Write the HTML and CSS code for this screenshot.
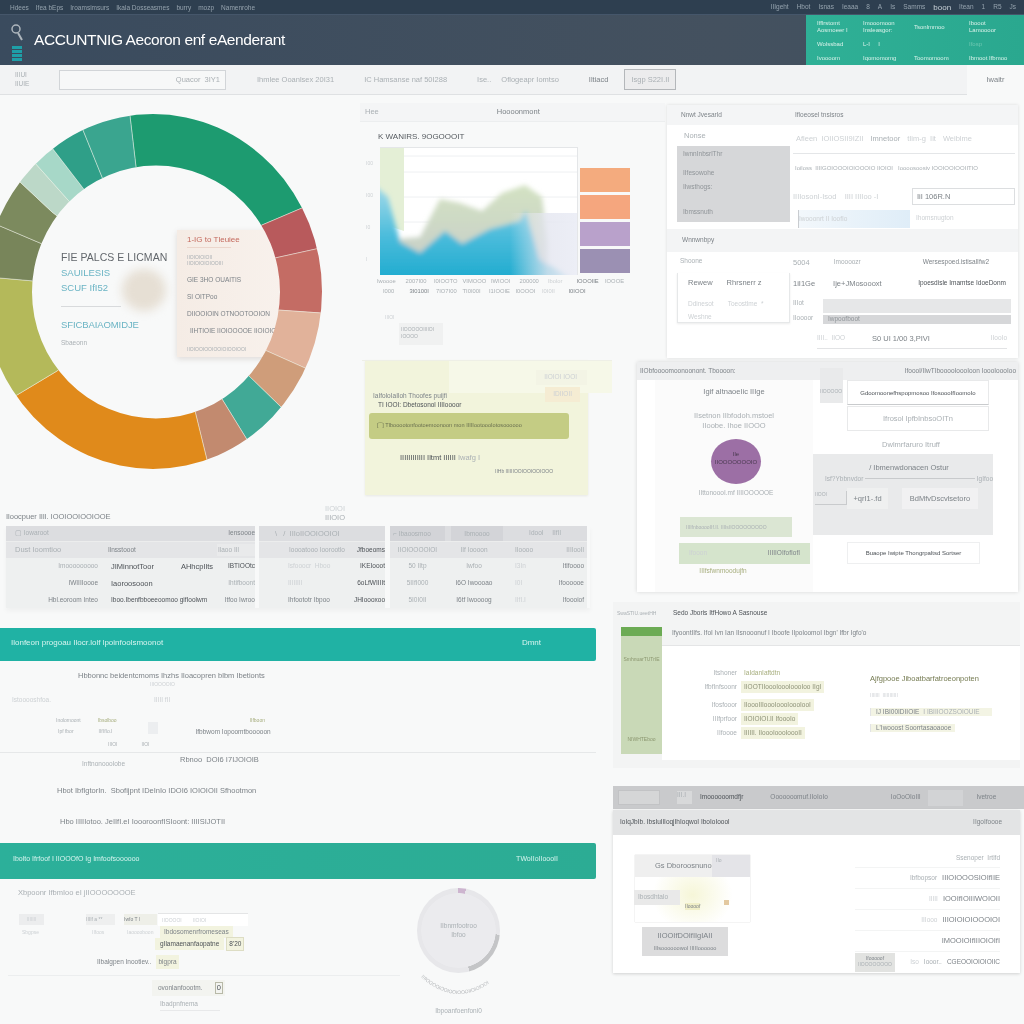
FILE: index.html
```html
<!DOCTYPE html>
<html lang="en">
<head>
<meta charset="utf-8">
<title>Accounting Assessment</title>
<link rel="stylesheet" href="styles.css">
</head>
<body>
<div class="app">
  <div class="topbar">
    <div class="topnav">
      <span>Hdees</span><span>Ifea bEps</span><span>Iroamsimsurs</span><span>Ikala Dosseasmes</span><span>burry</span><span>mozp</span><span>Namenrohe</span>
    </div>
    <div class="topnav topnav-right">
      <span>IIIgeht</span><span>Hbot</span><span>Isnas</span><span>Ieaaa</span><span>8</span><span>A</span><span>Is</span><span>Samms</span><span class="bright">boon</span><span>Itean</span><span>1</span><span>R5</span><span>Js</span>
    </div>
  </div>

  <div class="banner">
    <div class="brand-icons">
      <svg class="search-icon" viewBox="0 0 14 18" width="14" height="18"><circle cx="6" cy="6" r="4" fill="none" stroke="#aeb6bd" stroke-width="1.5"/><path d="M8 10 L12 17" stroke="#aeb6bd" stroke-width="2"/></svg>
      <div class="teal-bars"><i></i><i></i><i></i><i></i></div>
    </div>
    <h1 class="title">ACCUNTNIG Aecoron enf eAenderant</h1>
    <div class="banner-stats">
      <span>Ifflrstomt<br>Aosmoeer I</span><span>Imooomoon<br>Insleasgor:</span><span class="mid">Tsonlmmoo</span><span>Ibooot<br>Lamoooor</span>
      <span>Wolssbad</span><span>L-I &nbsp; &nbsp; I</span><span></span><span class="faint">Ifosp</span>
      <span>Ivoooom</span><span>Iqomomomg</span><span>Toomomoom</span><span>Ibmoot Ifbmoo</span>
    </div>
  </div>

  <div class="toolbar">
    <span class="t6 lt tool-label">IIIUI<br>IIUIE</span>
    <div class="search-box"><span class="t7 lt">Quacor &nbsp;3IY1</span></div>
    <span class="t7 lt ml-31">Ihmlee Ooanlsex 20I31</span>
    <span class="t7 lt ml-30">IC Hamsanse naf 50I288</span>
    <span class="t7 lt ml-30">Ise..</span>
    <span class="t7 lt ml-10">Oflogeapr Iomtso</span>
    <span class="t7 md ml-30">Iltiacd</span>
    <button class="tool-btn t7 lt ml-16">Isgp S22I.II</button>
    <div class="tool-right"><span class="t7 md">Iwaitr</span></div>
  </div>

  <div class="columns">
    <div class="col-left">
      <div class="hero">
        <div class="donut">
          <div class="donut-blob"></div>
          <div class="donut-text">
            <div class="dt-main">FIE PALCS E LICMAN</div>
            <div class="dt-teal">SAUILESIS</div>
            <div class="dt-teal">SCUF IfI52</div>
            <div class="dt-rule"></div>
            <div class="dt-teal dt-gap">SFICBAIAOMIDJE</div>
            <div class="t6 lt dt-foot">Sbaeonn</div>
          </div>
          <div class="donut-card">
            <div class="card-title">1-IG to Tleuiee</div>
            <div class="t5 lt card-line">IIOIOIOIOII<br>IIOIOIOIOIOOIII</div>
            <div class="t6 md card-line">GIE 3HO OUAITIS</div>
            <div class="t6 md card-line">SI OITPoo</div>
            <div class="t6 md card-line">DIIOOIOIN OTNOOTOOION</div>
            <div class="t6 md card-line card-in">IIHTIOIE IIOIOOOOE IIOIOIOO</div>
            <div class="t5 lt card-line">IIOIOOIOOIOOIOIOOIOOI</div>
          </div>
          <svg class="donut-svg" viewBox="0 95 360 405" width="360" height="405">
            <defs><clipPath id="ringclip"><path clip-rule="evenodd" d="M-16 291.5a169 177.5 0 1 0 338 0a169 177.5 0 1 0-338 0ZM32 292a124 126.5 0 1 0 248 0a124 126.5 0 1 0-248 0Z"/></clipPath></defs>
            <g clip-path="url(#ringclip)" stroke="#f1f3ea" stroke-width=".7" stroke-opacity=".65">
              <polygon fill="#1d9b70" points="156,292 136,167 124,65 300,60 342,191 262,225"/>
              <polygon fill="#b85a5c" points="156,292 262,225 342,191 357,240 275,258"/>
              <polygon fill="#c46c64" points="156,292 275,258 357,240 364,316 278,310"/>
              <polygon fill="#e1b29a" points="156,292 278,310 364,316 343,385 267,351"/>
              <polygon fill="#cf9d7a" points="156,292 267,351 343,385 313,438 249,376"/>
              <polygon fill="#41a996" points="156,292 249,376 313,438 270,477 222,399"/>
              <polygon fill="#c28a6f" points="156,292 222,399 270,477 219,509 195,411"/>
              <polygon fill="#e08a1b" points="156,292 195,411 219,509 100,540 -23,419 57,371"/>
              <polygon fill="#b4b95a" points="156,292 57,371 -23,419 -34,275 34,281"/>
              <polygon fill="#78855a" points="156,292 34,281 -34,275 -40,209 40,243"/>
              <polygon fill="#7c8a5e" points="156,292 40,243 -40,209 -12,152 52,212"/>
              <polygon fill="#bcd8c8" points="156,292 52,212 -12,152 2,126 68,200"/>
              <polygon fill="#a7d8c8" points="156,292 68,200 2,126 23,110 83,188"/>
              <polygon fill="#2f9f88" points="156,292 83,188 23,110 64,83 102,177"/>
              <polygon fill="#3aa58f" points="156,292 102,177 64,83 124,65 136,167"/>
            </g>
          </svg>
        </div>

        <div class="chart-col">
          <div class="chart-head"><span class="t7 lt">Hee</span><span class="t7 md ml-118">Hoooonmont</span></div>
          <div class="chart-title">K WANIRS. 9OGOOOIT</div>
          <div class="chart-row">
            <div class="y-axis t5 pale"><span>I00</span><span>I00</span><span>I0</span><span>I</span></div>
            <svg class="chart" viewBox="0 0 198 128" width="198" height="128">
              <defs>
                <linearGradient id="blue" x1="0" y1="0" x2="0" y2="1"><stop offset="0" stop-color="#a8dcea"/><stop offset=".5" stop-color="#49bbdb"/><stop offset="1" stop-color="#12a6cb"/></linearGradient>
                <linearGradient id="veil" x1="0" y1="0" x2="1" y2="0"><stop offset="0" stop-color="#e9eaf3" stop-opacity="0"/><stop offset=".55" stop-color="#e4e6f0" stop-opacity=".8"/><stop offset="1" stop-color="#eceef6" stop-opacity=".98"/></linearGradient>
                <linearGradient id="fade" x1="0" y1="0" x2="0" y2="1"><stop offset="0" stop-color="#d3e2c2"/><stop offset="1" stop-color="#c4c9cc"/></linearGradient>
                <filter id="soft" x="-10%" y="-10%" width="120%" height="130%"><feGaussianBlur stdDeviation="2.6"/></filter>
                <clipPath id="plot"><rect width="198" height="128"/></clipPath>
              </defs>
              <rect width="198" height="128" fill="#ffffff"/>
              <path d="M0 9H198M0 25H198M0 50H198M0 75H198" stroke="#eef0f2"/>
              <path fill="#e4efd6" d="M0 0H24V84L12 80 0 60Z"/>
              <g filter="url(#soft)" clip-path="url(#plot)">
                <path fill="url(#fade)" d="M16 92 L40 90 L60 52 L80 56 L102 64 L122 46 L145 38 L162 50 L168 95 L168 140 L16 140Z"/>
                <path fill="url(#blue)" d="M-8 36 L8 50 L20 95 L40 106 L65 84 L82 97 L110 82 L140 74 L146 64 L160 112 L192 132 L192 145 L-8 145Z"/>
              </g>
              <rect x="130" y="66" width="68" height="62" fill="url(#veil)"/>
              <path d="M0 .5H198M197.5 0V128" stroke="#e4e6e8" fill="none"/>
            </svg>
            <div class="swatches"><i class="sw-a"></i><i class="sw-b"></i><i class="sw-c"></i><i class="sw-d"></i></div>
          </div>
          <div class="x-row t6 lt"><span>Iwoooe</span><span>2007I00</span><span>I0IOOTO</span><span>VIMOOO</span><span>IWIOOI</span><span>200000</span><span class="pale">Ibolor</span><span class="md">IOOOIIE</span><span>IOOOE</span></div>
          <div class="x-row x-row2 t6 lt"><span>I000</span><span class="md">3I0100I</span><span>7IO7I00</span><span>TI0I00I</span><span>I1IOOIE</span><span>I0OOOI</span><span class="pale">I0I0II</span><span class="md">I0IOOI</span></div>
          <div class="mini-tile"><span class="t5 pale">IIIOI</span><div class="mini-body t5 lt">IIOOOOOIIIIOI<br>IOOOO</div></div>
          <div class="note">
            <div class="note-top"><span class="note-tag t6 pale">IIOIOI IOOI</span></div>
            <div class="note-body">
              <div class="note-row"><span class="t6 md">IaIfoloIaIloh Thoofes puijfi</span><span class="note-chip t6 pale">IDIIOII</span></div>
              <div class="t6 dk note-second">TI IOOI: Dbetosonol IIIIoooor</div>
              <div class="note-bar t6 md">[‾‾] Tlbooootonfootoemoonoon mon IIIIIootoooIotosoooooo</div>
              <div class="t7 dk note-third">IIIIIIIIIIII Iltmt IIIIII <span class="lt">Iwafg I</span></div>
              <div class="t5 md note-fourth">IIHb IIIIIIOOIOOIOOIOOO</div>
            </div>
          </div>
        </div>
      </div>

      <div class="stray t7 pale">IIOIOI<br><b class="lt">IIIOIO</b></div>
      <div class="table-title t7 md">Iloocpuer IlIl. IOOIOOIOOIOOE</div>
      <div class="table">
        <div class="group g1">
          <div class="g1-row th1"><span class="t6 lt g1-a">▢ Iowaroot</span><span></span><span class="t6 md end">Iensoooe</span></div>
          <div class="g1-row th2"><span class="t7 lt g1-a">Dust Ioomtioo</span><span class="t6 md g1-b">Ilnsstooot</span><span class="chip t6 lt">Ilaoo IIl</span></div>
          <div class="g1-row tr"><span class="t6 lt end">Imooooooooo</span><span class="t7 dk g1-c split"><em>JIMinnotToor</em><em>AHhcpIlts</em></span><span class="t6 dk end">IBTIOOtc</span></div>
          <div class="g1-row tr"><span class="t6 md end">IWIIIIoooe</span><span class="t7 dk g1-c">Iaoroosooon</span><span class="t6 lt end">Ihtifboont</span></div>
          <div class="g1-row tr"><span class="t6 md end">Hbl.eoroom Inteo</span><span class="t6 dk g1-c">Iboo.Ibenfbboeeoomoo gifIoolwm</span><span class="t6 md end">Itfoo Iwroo</span></div>
        </div>
        <div class="group g2">
          <div class="g2-row th1"><span class="t7 lt">\ &nbsp; / &nbsp;IIIoIIOOIOOIOI</span><span></span></div>
          <div class="g2-row th2"><span class="t6 lt end">Ioooatooo Ioorootlo</span><span class="t6 dk end">Jfboeoms</span></div>
          <div class="g2-row tr"><span class="t6 pale g2-a">Isfooocr &nbsp;Hboo</span><span class="t6 dk end">IKEIooot</span></div>
          <div class="g2-row tr"><span class="t6 pale g2-a">IIIIIIII</span><span class="t6 dk end">6oLfWIIIIt</span></div>
          <div class="g2-row tr"><span class="t6 md g2-a">Ihfoototr Ibpoo</span><span class="t6 dk end">JHIoooxoo</span></div>
        </div>
        <div class="group g3">
          <div class="g3-row th1"><span class="t6 lt dark-cell">⌐ Ibaoosmoo</span><span class="t6 lt dark-cell center">Ibmoooo</span><span class="t6 lt center">Idool &nbsp; &nbsp; IIfIl</span></div>
          <div class="g3-row th2"><span class="t6 lt center">IIOIOOOOIOI</span><span class="t6 lt center">IIf Ioooon</span><span class="t6 lt split"><em class="center">IIoooo</em><em>IIIIooIl</em></span></div>
          <div class="g3-row tr"><span class="t6 lt center">50 IItp</span><span class="t6 lt center">Iwfoo</span><span class="t6 md split"><em class="pale">I3In</em><em>Itlfoooo</em></span></div>
          <div class="g3-row tr"><span class="t6 lt center">5IIfI000</span><span class="t6 md center">I6O Iwoooao</span><span class="t6 md split"><em class="pale">I0I</em><em>Ifoooooe</em></span></div>
          <div class="g3-row tr"><span class="t6 lt center">5I0I0II</span><span class="t6 md center">I6tf Iwoooog</span><span class="t6 md split"><em class="pale">IIfI.I</em><em>Ifoooiof</em></span></div>
        </div>
      </div>

      <div class="teal-bar bar-one"><span>Ilonfeon progoau Ilocr.lolf lpoinfoolsmoonot</span><span class="bar-end">Dmnt</span></div>
      <div class="flow-block">
        <div class="fl-line t7 md fl-a">Hbbonnc beidentcmoms Ihzhs Iloacopren blbm Ibetionts</div>
        <div class="fl-line t5 pale fl-b">IIIOOOOIO</div>
        <div class="fl-line fl-row1"><span class="t6 pale fl-c">Istooooshfoa.</span><span class="t6 pale fl-d">IIIII fII</span></div>
        <div class="fl-line fl-row2"><span class="t5 lt fl-e">Inolomoont</span><span class="t5 yel fl-f">Ibsolboo</span><span class="t5 yel fl-g">IIfboon</span></div>
        <div class="fl-line fl-row3"><span class="t5 lt fl-h">Ipf fbor</span><span class="t5 lt fl-i">IIfIfIo.I</span><span class="tile-small"></span><span class="t6 md fl-j">Ifbbwom Iopoomtbooooon</span></div>
        <div class="fl-rule"><span class="t5 lt fl-k">IIIOI</span><span class="t5 lt fl-l">IIOI</span></div>
        <div class="fl-line fl-row4"><span class="t6 lt fl-n">Inftnonooolobe</span><span class="t7 md fl-m">Rbnoo &nbsp;DOI6 I7IJOIOIB</span></div>
        <div class="fl-line t7 md fl-o">Hbot IbfIgtorIn. &nbsp;Sbofijpnt IDeInIo IDOI6 IOIOIOII Sfhootmon</div>
        <div class="fl-line t7 md fl-p">Hbo IIIIIotoo. JeIIfI.eI IoooroonfISIoont: IIIISIJOTII</div>
      </div>

      <div class="teal-bar bar-two"><span>Ibolto Ifrfoof I IIOOOfO Ig Imfoofsoooooo</span><span class="bar-end">TWoIIoIIoooII</span></div>
      <div class="bottom">
        <div class="form-panel">
          <div class="t7 lt fp-title">Xbpoonr IfbmIoo eI jIIOOOOOOOE</div>
          <div class="fp-row fp-row1"><span class="fp-tile t5 pale">IIIIIII</span><span class="fp-tile2 t5 lt">IIIIf a **</span><span class="fp-tile3 t5 md">Iwfo T I</span><span class="fp-input t5 pale">IIOOOOI &nbsp; &nbsp; &nbsp; &nbsp;IIOIOI</span></div>
          <div class="fp-row fp-row2"><span class="t5 pale fp-l1">Sbgpse</span><span class="t5 pale fp-l2">IIfoos</span><span class="t5 pale fp-l3">Iaooooboon</span><span class="t6 md ybg fp-l4">Ibdosomenrfromeseas</span></div>
          <div class="fp-row fp-row3"><span class="t6 dk ybg fp-m1">gIlamaenanfaopatne</span><span class="t6 dk ybg fp-m2">8'20</span></div>
          <div class="fp-row fp-row4"><span class="t6 md fp-n1">IIbalgpen Inootiev..</span><span class="t6 md ybg fp-n2">bigpra</span></div>
        </div>
        <div class="fp-sub"><span class="t6 md">ovonlanfoootm.</span><span class="t7 dk fp-zero">0</span></div>
        <div class="fp-sub2 t6 lt">Ibadpnfnema</div>
        <div class="ring-wrap">
          <div class="ring"><span class="t6 lt">IIbnmfootroo<br>Ibfoo</span></div>
          <svg class="arc-text" viewBox="0 0 80 24" width="80" height="24"><defs><path id="curve" d="M2 2 Q40 36 78 2"/></defs><text class="arc-label"><textPath href="#curve">IIIIOOOOIOOIOOIOOOIIOIOIOOI</textPath></text></svg>
          <div class="t6 lt ring-cap">Ibpoanfoenfoni0</div>
        </div>
      </div>
    </div>

    <div class="col-right">
      <section class="panel-one">
        <div class="po-head"><span class="t6 md po-h1">Nnwt Jvesarld</span><span class="t6 md">Ifloeosel tnsisros</span></div>
        <div class="po-grid">
          <div class="po-left">
            <div class="po-name t7 lt">Nonse</div>
            <div class="po-gray t6 lt"><span>IwnnInbsrlThr</span><span class="po-s1">IIfesowohe</span><span class="po-s2">IIwsthogs:</span><span class="po-s3">Ibmssnuth</span></div>
          </div>
          <div class="po-right">
            <div class="po-r1 t7 pale"><span>Afleen &nbsp;IOIIOSII9IZII</span><span class="lt">Imnetoor</span><span>tIim-g &nbsp;Iit</span><span>Weiblme</span></div>
            <div class="po-lines"><div class="po-line"><span class="t6 lt">Ioiloss &nbsp;IIIIGOIOOOIOIOOOIO IIOIOI &nbsp; Ioooosoosiv IOOIOOIOOIITIO</span></div></div>
            <div class="po-r3"><span class="t7 pale">IIIIosonI-Isod &nbsp; &nbsp;IIII IIIIoo -I</span><span class="po-box t7 md">IiI 106R.N</span></div>
            <div class="po-r4"><span class="po-blue t6 pale">Iwooonrt II IoofIo</span><span class="t6 pale po-after">Ihomsnugton</span></div>
          </div>
        </div>
        <div class="po-strip t6 md">Wnnwnbpy</div>
        <div class="po-grid2">
          <div class="po-left2">
            <div class="t6 lt po-sh">Shoone</div>
            <div class="po-box2"><div class="po-bl1 t7 md"><span>Rewew</span><span class="ml-14">Rhrsnerr z</span></div><div class="po-bl2 t6 pale"><span>Ddinesot</span><span class="ml-14">Toeostlme &nbsp;*</span></div><div class="t6 pale po-bl3">Weshne</div></div>
          </div>
          <div class="po-right2">
            <div class="po-rr1"><span class="t7 lt">5004</span><span class="t6 lt ml-24">Imoooozr</span><span class="t6 md po-push">Wersespoed.istisalIfw2</span></div>
            <div class="po-rr2"><span class="t7 md">1iI1Ge</span><span class="t7 md ml-18">Ije+JMosoooxt</span><span class="t6 dk po-push">Ipoesdisle Imamtse IdoeDonm</span></div>
            <div class="po-bars"><div class="po-side t6 lt"><span>IIIot</span><span>IIoooor</span></div><div class="po-barstack"><div class="po-bar1"></div><div class="po-bar2 t6 lt">Iwpoofboot</div></div></div>
          </div>
        </div>
        <div class="po-foot"><span class="t6 pale po-f1">IIII.. &nbsp;IIOO</span><span class="t7 md po-f2">S0 UI 1/00 3,PIVI</span><span class="t6 pale po-f3">IIooIo</span></div>
      </section>

      <section class="panel-two">
        <div class="pt-head"><span class="t6 md">IIObfoooomoonoonont. Tboooon:</span><span class="t6 lt pt-hm">I 05</span><span class="t6 md pt-hr">Ifoool/IIwTIbooooIoooIoon IoooIoooIoo</span></div>
        <div class="pt-body">
          <div class="pt-left">
            <div class="pt-l1 t7 md">Igif aItnaoeIic IIIge</div>
            <div class="pt-l2 t7 lt">IIsetnon IIbfodoh.mstoel<br>IIoobe. Ihoe IIOOO</div>
            <div class="pt-circle t6 dk">Ile<br>IIOOOOOOOIO</div>
            <div class="pt-l3 t6 lt">IIttonoooI.mf IIIIOOOOOE</div>
            <div class="pt-green1 t5 lt">IIIIfnbooooIIf.II. IIIIsIIOOOOOOOOO</div>
            <div class="pt-green2 t6 md"><span class="pale">Ifooon</span><span>IIIIIOIfofIofI</span></div>
            <div class="pt-l4 t6 yel">IIIfsfwnmoodujfn</div>
          </div>
          <div class="pt-right">
            <div class="pt-top">
              <div class="pt-tab t5 lt">IIOOOOO</div>
              <div class="pt-boxes"><div class="pt-box t6 dk box-line">Gdoomoonefhspopmosoo IfosoooIfIoomoIo</div><div class="pt-box t7 lt">Ifrosol IpfbInbsoOITn</div></div>
            </div>
            <div class="pt-cap t7 lt">Dwlmrfaruro Itruff</div>
            <div class="pt-block">
              <div class="pt-bt t7 md">/ Ibmenwdonacen Ostur</div>
              <div class="pt-axis t6 lt"><span>Isf?Ybbnvdor</span><i></i><span>IgIfoo</span></div>
              <div class="pt-inputs">
                <div class="pt-cell t5 lt">IIOOI</div>
                <div class="pt-val t7 md">+qrI1-.fd</div>
                <div class="pt-val2 t7 md">BdMfvDscvlsetoro</div>
              </div>
            </div>
            <div class="pt-final t6 dk">Buaope Iwipte Thongrpaltsd Sortser</div>
          </div>
        </div>
      </section>

      <section class="panel-a">
        <div class="pa-head"><span class="t5 lt pa-h1">SwaSTIU.ueetHH</span><span class="t6 dk">Sedo Jboris ItfHowo A Sasnouse</span></div>
        <div class="pa-main">
          <div class="pa-side"><div class="pa-side-top"></div><div class="pa-side-body t5 lt"><span>SmhnuarTUTrIE</span><span>NIWHTEboo</span></div></div>
          <div class="pa-content">
            <div class="pa-sub t6 md">IfyoontIIfs. IfoI Ivn Ian IIsnooonuf I Iboofe IIpoloomoI Ibgn' Ifbr Igfo'o</div>
            <div class="pa-white">
              <div class="pa-form">
                <div class="pa-fr"><span class="t6 lt">Itshoner</span><b class="t6 yel val">IaIdanIaftdtn</b></div>
                <div class="pa-fr"><span class="t6 lt">IfbfInfsoonr</span><b class="t6 lt val vbg">IIOOTIIoooIoooIoooIoo&nbsp;IIgI</b></div>
                <div class="pa-fr pa-fr-gap"><span class="t6 lt">Ifosfooor</span><b class="t6 lt val vbg">IIoooIIIoooIoooIoooIooI</b></div>
                <div class="pa-fr"><span class="t6 lt">IIIfprfoor</span><b class="t6 lt val vbg">IIOIOIOI.II IfoooIo</b></div>
                <div class="pa-fr"><span class="t6 lt">IIfoooe</span><b class="t6 lt val vbg">IIIIII. IIoooIoooIoooII</b></div>
              </div>
              <div class="pa-info">
                <div class="t7 yelk pa-i1">Ajfgpooe Jiboatbarfatroeonpoten</div>
                <div class="t5 pale pa-i2">IIIIIII &nbsp;IIIIIIIIIII</div>
                <div class="pa-i3"><span class="t7 md">IJ IBI00IDIIOIE</span><span class="t7 lt">I IBIIIOOZSOIOUIE</span></div>
                <div class="pa-i4 t7 md">L'Iwooost Soorrtasaoaooe</div>
              </div>
            </div>
          </div>
        </div>
      </section>

      <div class="graybar">
        <div class="gb-mini"></div><div class="gb-box t6 lt">III.I</div>
        <span class="t6 dk gb-a">Imoooooomdfjr</span><span class="t6 md gb-b">Ooooooomuf.IIoIoIo</span><span class="t6 md gb-c">IoOoOIoIIl</span><div class="gb-soft"></div><span class="t6 md gb-d">Ivetroe</span>
      </div>

      <section class="panel-b">
        <div class="pb-head"><span class="t6 dk">IoIqJbIb. IbsIuIlIoqjIhIoqwoI IboIoIoool</span><span class="t6 md">IIgoIfoooe</span></div>
        <div class="pb-body">
          <div class="pb-left">
            <div class="pb-card">
              <div class="pb-ctop"><span class="t7 md">Gs Dboroosnuno</span><span class="pb-cside t5 lt">IIo</span></div>
              <div class="pb-glow"><span class="pb-lab t6 lt">Ibosdhtalo</span><span class="pb-yel t5 md">IIoooof</span><span class="pb-ora"></span></div>
            </div>
            <div class="pb-tile"><span class="t7 md">IIOOIfDOIfIIgIAII</span><span class="t6 md">IIIsoooooowoI IIIIIoooooo</span></div>
          </div>
          <div class="pb-list">
            <div class="pb-cap t6 lt">Ssenoper &nbsp;Irtlfd</div>
            <div class="pb-li"><span class="t6 lt">Ibfbopsor</span><span class="t7 md">IIIOIOOOSIOIfIIE</span></div>
            <div class="pb-li"><span class="t6 pale">IIIII</span><span class="t7 md">IOOIfIOIIIWOIOII</span></div>
            <div class="pb-li"><span class="t6 pale">IIIooo</span><span class="t7 md">IIIOIOIOIOOOIOI</span></div>
            <div class="pb-li"><span></span><span class="t7 md">IMOOIOIfIIIOIOIfI</span></div>
            <div class="pb-li pb-last"><span class="pb-tag t5 md">Ifooooof<br><i class="lt">IIOOOOOOOO</i></span><span class="t6 pale">Iso</span><span class="t6 lt">Iooor..</span><span class="t6 md">CGEOOIOIOIOIIC</span></div>
          </div>
        </div>
      </section>
    </div>
  </div>
</div>
</body>
</html>
```

FILE: styles.css
```css
* { box-sizing: border-box; }
html, body { margin: 0; padding: 0; }
body { width: 1024px; height: 1024px; overflow: hidden; background: #f8f9f9; font-family: "Liberation Sans", Arial, sans-serif; }
.app { width: 1024px; height: 1024px; display: flex; flex-direction: column; overflow: hidden; filter: blur(.4px); background: #f8f9f9; }
em, i, b { font-style: normal; font-weight: normal; }

.t5 { font-size: 5px; line-height: 1.25; }
.t6 { font-size: 6.5px; line-height: 1.25; }
.t7 { font-size: 7.5px; line-height: 1.25; }
.dk { color: #4d5257; }
.md { color: #7d8388; }
.lt { color: #aab0b4; }
.pale { color: #cdd1d4; }
.yel { color: #a6ad7d; }
.yelk { color: #757b52; }
.end { text-align: right; justify-self: end; }
.center { text-align: center; }
.split { display: flex; justify-content: space-between; }

.ml-10 { margin-left: 10px; }
.ml-14 { margin-left: 14px; }
.ml-16 { margin-left: 16px; }
.ml-18 { margin-left: 18px; }
.ml-24 { margin-left: 24px; }
.ml-30 { margin-left: 30px; }
.ml-31 { margin-left: 31px; }
.ml-118 { margin-left: 118px; }

/* top */
.topbar { height: 15px; flex: none; background: #2e3f50; display: flex; justify-content: space-between; align-items: center; padding: 0 8px 0 10px; border-bottom: 1px solid #45566a; }
.topnav { display: flex; gap: 7px; font-size: 6.5px; color: #95a3ae; }
.topnav-right { gap: 8px; }
.topnav .bright { color: #c6d0d6; font-size: 8px; }
.banner { height: 50px; flex: none; background: linear-gradient(90deg, #3a4b5e, #44515f 70%, #40505f); display: flex; align-items: center; }
.brand-icons { width: 34px; height: 50px; padding: 8px 0 0 10px; flex: none; display: flex; flex-direction: column; }
.teal-bars { display: flex; flex-direction: column; gap: 1px; margin: 5px 0 0 2px; }
.teal-bars i { display: block; width: 10px; height: 3px; background: #1e9fa8; }
.title { font-size: 15.5px; font-weight: normal; color: #fff; margin: 0; letter-spacing: -.4px; white-space: nowrap; flex: 1; }
.banner-stats { width: 218px; height: 50px; flex: none; background: linear-gradient(90deg, #2fb096, #2aa88f); display: grid; grid-template-columns: 46px 51px 55px 1fr; grid-template-rows: 20px 14px 14px; padding: 2px 0 0 11px; font-size: 6px; line-height: 1.15; color: #d9f2ea; align-items: center; white-space: nowrap; }
.banner-stats .faint { color: #6cc7b1; }
.toolbar { height: 30px; flex: none; background: #f2f3f4; border-bottom: 1px solid #dfe1e3; display: flex; align-items: center; padding-left: 15px; white-space: nowrap; }
.tool-label { width: 20px; }
.search-box { margin-left: 24px; width: 167px; height: 20px; border: 1px solid #d2d5d8; background: #f7f8f8; display: flex; justify-content: flex-end; align-items: center; padding-right: 5px; }
.tool-btn { width: 52px; height: 21px; border: 1px solid #b4b7ba; background: #ececed; padding: 0; font-family: inherit; }
.tool-right { margin-left: auto; width: 57px; height: 30px; background: #f8f9f9; display: flex; align-items: center; justify-content: center; }

/* columns */
.columns { flex: 1; display: flex; min-height: 0; }
.col-left { width: 637px; flex: none; display: flex; flex-direction: column; }
.col-right { flex: 1; min-width: 0; padding-top: 10px; display: flex; flex-direction: column; }

/* donut */
.hero { height: 405px; flex: none; display: flex; }
.donut { width: 360px; height: 405px; flex: none; position: relative; }
.donut-svg { display: block; overflow: hidden; position: relative; z-index: 1; }
.donut-blob { position: absolute; left: 122px; top: 174px; width: 44px; height: 42px; border-radius: 50%; background: #e6dfd4; filter: blur(5px); }
.donut-text { position: absolute; left: 61px; top: 155px; }
.dt-main { font-size: 10.5px; line-height: 15px; color: #62676c; letter-spacing: .05px; white-space: nowrap; }
.dt-teal { font-size: 9.5px; line-height: 15px; color: #6ab4c4; white-space: nowrap; }
.dt-rule { width: 60px; height: 1px; background: #d8dadc; margin: 11px 0 10px; }
.dt-gap { letter-spacing: -.1px; }
.dt-foot { margin-top: 7px; }
.donut-card { position: absolute; left: 177px; top: 135px; width: 106px; height: 127px; background: linear-gradient(90deg, #f5ece5, #f8f1ec); box-shadow: 0 2px 6px rgba(120,100,90,.2); padding: 5px 0 0 10px; white-space: nowrap; }
.card-title { font-size: 8px; line-height: 10px; color: #c46a5e; border-bottom: 1px solid #ecd6cc; width: 44px; padding-bottom: 2px; margin-bottom: 6px; white-space: nowrap; }
.card-line { margin-bottom: 9px; }
.card-in { margin-left: 3px; margin-bottom: 11px; }

/* chart */
.chart-col { width: 277px; flex: none; padding-top: 8px; }
.chart-head { width: 305px; height: 19px; padding-left: 5px; background: #f4f5f6; display: flex; align-items: center; border-bottom: 1px solid #eceeef; }
.chart-title { font-size: 8px; line-height: 10px; color: #555a5f; padding: 10px 0 5px 18px; }
.chart-row { display: flex; height: 129px; }
.y-axis { width: 20px; height: 128px; display: flex; flex-direction: column; justify-content: space-around; padding-left: 6px; }
.chart { display: block; flex: none; }
.swatches { width: 50px; margin-left: 2px; padding-top: 21px; display: flex; flex-direction: column; gap: 3px; }
.swatches i { display: block; width: 50px; height: 24px; }
.sw-a { background: #f4ab7e; }
.sw-b { background: #f5a67e; }
.sw-c { background: #b9a1cb; }
.sw-d { background: #9b90b3; }
.x-row { display: grid; grid-template-columns: repeat(9, 26px); gap: 0 2.5px; padding: 2px 0 0 17px; white-space: nowrap; font-size: 5.8px; }
.x-row2 { grid-template-columns: repeat(8, 24px); padding-top: 3px; padding-left: 23px; }
.mini-tile { margin: 10px 0 0 25px; height: 27px; }
.mini-body { margin-left: 14px; width: 44px; height: 22px; background: #f0f1f1; padding: 3px 2px; }
.note { margin: 28px 0 0 2px; width: 250px; }
.note-top { height: 33px; width: 250px; background: linear-gradient(90deg, #f9faf9 35%, #f6f8e8 35%); border-top: 1px solid #eeefe6; display: flex; justify-content: flex-end; align-items: center; padding-right: 25px; }
.note-tag { background: #f3f4e5; padding: 3px 10px 3px 8px; }
.note-body { width: 223px; margin-left: 3px; margin-top: -33px; height: 135px; background: #f2f4dc; padding-top: 32px; box-shadow: 0 1px 2px rgba(120,120,90,.12); position: relative; }
.note-top { position: relative; z-index: 1; background: linear-gradient(90deg, rgba(249,250,249,0) 35%, #f6f8e8 35%); }
.note-row { display: flex; justify-content: space-between; padding: 0 8px 0 8px; position: relative; z-index: 2; }
.note-chip { background: #f5ecd3; padding: 3px 8px; margin-top: -5px; }
.note-second { padding-left: 13px; margin-top: -1px; }
.note-bar { margin: 4px 0 0 4px; width: 200px; height: 26px; background: #c4cc84; border-radius: 3px; padding: 9px 0 0 8px; white-space: nowrap; color: #6a7050; font-size: 5.6px; }
.note-third { padding-left: 35px; margin-top: 14px; white-space: nowrap; }
.note-fourth { padding-left: 130px; margin-top: 6px; white-space: nowrap; }

/* table */
.stray { margin: 4px 0 0 325px; height: 22px; }
.stray b { display: block; }
.table-title { margin: -14px 0 4px 6px; height: 10px; white-space: nowrap; }
.table { width: 584px; margin-left: 6px; display: flex; gap: 4px; height: 82px; flex: none; box-shadow: 0 3px 5px rgba(0,0,0,.04); white-space: nowrap; }
.group { background: #eef0f0; flex: none; }
.g1 { width: 249px; }
.g2 { width: 126px; }
.g3 { width: 197px; margin-left: 1px; }
.th1 { height: 15px; background: #dcdde0; }
.th2 { height: 17px; background: #e4e5e7; border-top: 1px solid #eceded; }
.tr { height: 17px; }
.g1-row { display: grid; grid-template-columns: 92px 119px 38px; align-items: center; padding-right: 2px; }
.g1-a { padding-left: 9px; }
.g1-b { padding-left: 10px; }
.g1-c { padding-left: 13px; padding-right: 4px; }
.chip { background: #e9eaeb; padding: 2px 1px; }
.g2-row { display: grid; grid-template-columns: 86px 40px; align-items: center; padding-right: 2px; }
.g2-row.th1 { padding-left: 16px; grid-template-columns: 110px 0; }
.g2-a { padding-left: 29px; }
.g3-row { display: grid; grid-template-columns: 55px 58px 84px; align-items: center; height: 17px; }
.g3-row.th1 { height: 15px; }
.g3-row .split { padding: 0 3px 0 12px; }
.dark-cell { background: #d3d4d8; height: 15px; line-height: 15px; padding-left: 3px; }
.dark-cell + .dark-cell { margin-left: 6px; padding: 0; }

/* teal */
.teal-bar { width: 596px; flex: none; display: flex; justify-content: space-between; align-items: center; padding: 0 55px 0 11px; color: #d7f4ef; white-space: nowrap; border-radius: 0 2px 2px 0; }
.bar-one { height: 33px; margin-top: 20px; background: #20b2a4; padding-bottom: 5px; font-size: 8px; }
.bar-two { height: 36px; background: linear-gradient(90deg, #2cb09a, #2cac94); padding: 0 38px 6px 13px; font-size: 7px; }
.flow-block { height: 182px; flex: none; width: 596px; padding-top: 10px; white-space: nowrap; }
.fl-line { height: 10px; }
.fl-a { margin-left: 78px; }
.fl-b { margin-left: 150px; }
.fl-row1 { display: flex; margin-top: 5px; }
.fl-c { margin-left: 12px; }
.fl-d { margin-left: 103px; }
.fl-row2 { display: flex; margin-top: 11px; }
.fl-e { margin-left: 56px; }
.fl-f { margin-left: 17px; }
.fl-g { margin-left: 133px; }
.fl-row3 { display: flex; margin-top: 1px; }
.fl-h { margin-left: 58px; }
.fl-i { margin-left: 25px; }
.tile-small { width: 10px; height: 12px; margin: -6px 0 0 36px; background: #eceef0; }
.fl-j { margin-left: 37px; }
.fl-rule { height: 12px; margin-top: 3px; display: flex; border-bottom: 1px solid #e6e8e9; align-items: flex-start; }
.fl-k { margin-left: 108px; }
.fl-l { margin-left: 24px; }
.fl-row4 { display: flex; height: 15px; }
.fl-n { margin-left: 82px; align-self: flex-end; }
.fl-m { margin-left: 55px; padding-top: 2px; align-self: flex-start; }
.fl-o { margin: 18px 0 0 57px; }
.fl-p { margin: 21px 0 0 60px; }

/* bottom */
.bottom { flex: 1; position: relative; width: 596px; white-space: nowrap; }
.form-panel { margin-left: 8px; width: 392px; height: 97px; border-bottom: 1px solid #eceeef; padding-top: 9px; }
.fp-title { margin-left: 10px; }
.fp-row { display: flex; align-items: center; }
.fp-row1 { margin-top: 15px; height: 14px; }
.fp-tile { margin-left: 11px; width: 25px; height: 11px; background: #ecedee; text-align: center; line-height: 11px; }
.fp-tile2 { margin-left: 42px; width: 29px; height: 11px; background: #eeefef; line-height: 11px; }
.fp-tile3 { margin-left: 9px; width: 33px; height: 11px; background: #eeefe8; line-height: 11px; }
.fp-input { margin-left: 1px; width: 90px; height: 13px; background: #fff; border-top: 1px solid #e4e5e6; line-height: 12px; padding-left: 4px; }
.fp-row2 { height: 12px; }
.fp-l1 { margin-left: 14px; width: 30px; }
.fp-l2 { margin-left: 40px; width: 30px; }
.fp-l3 { margin-left: 5px; width: 30px; }
.ybg, .vbg { background: #f2f3df; }
.fp-l4 { margin-left: 3px; padding: 2px 4px; }
.fp-row3 { height: 12px; }
.fp-m1 { margin-left: 147px; padding: 2px 5px; }
.fp-m2 { margin-left: 2px; padding: 2px; border: 1px solid #ddddc4; }
.fp-row4 { height: 12px; margin-top: 6px; }
.fp-n1 { margin-left: 89px; }
.fp-n2 { margin-left: 5px; padding: 3px 2px; }
.fp-sub { margin: 4px 0 0 152px; width: 73px; height: 16px; background: #f3f4f0; display: flex; justify-content: space-between; align-items: center; padding: 0 2px 0 6px; }
.fp-zero { border: 1px solid #b8b9a8; padding: 0 1px; }
.fp-sub2 { margin: 4px 0 0 160px; width: 60px; border-bottom: 1px solid #e8e9ea; padding-bottom: 2px; }
.ring-wrap { position: absolute; left: 417px; top: 9px; width: 83px; display: flex; flex-direction: column; align-items: center; }
.ring { width: 83px; height: 85px; border-radius: 50%; display: flex; align-items: center; justify-content: center; text-align: center; background: radial-gradient(circle, #ebebee 0 37px, transparent 37.6px), conic-gradient(#cdb5cf 0 10deg, #e7e7ea 10deg 96deg, #c4c5c7 96deg 165deg, #e7e7ea 165deg); }
.arc-text { display: block; margin-top: 2px; overflow: visible; }
.arc-label { font-size: 5px; fill: #b4b7ba; font-family: "Liberation Sans", Arial, sans-serif; }
.ring-cap { margin-top: 8px; }

/* panel one */
.panel-one { margin-left: 30px; width: 351px; height: 253px; flex: none; background: #fff; box-shadow: 0 0 3px rgba(0,0,0,.12); padding: 0 3px 0 10px; white-space: nowrap; }
.po-head { height: 20px; margin-left: -10px; margin-right: -3px; padding-left: 14px; background: #f4f5f6; display: flex; align-items: center; }
.po-h1 { width: 114px; }
.po-grid { display: grid; grid-template-columns: 113px 222px; gap: 3px; }
.po-name { height: 21px; padding: 6px 0 0 7px; }
.po-gray { height: 76px; background: #d6d7d9; padding: 4px 0 0 6px; display: flex; flex-direction: column; color: #8f9498; }
.po-s1 { margin-top: 11px; }
.po-s2 { margin-top: 6px; }
.po-s3 { margin-top: 17px; }
.po-r1 { height: 21px; display: flex; gap: 7px; align-items: center; padding: 6px 0 0 3px; }
.po-lines { height: 32px; }
.po-line { height: 16px; border-top: 1px solid #e4e6e8; margin-top: 7px; padding: 2px 0 0 2px; }
.po-line .t6 { font-size: 6px; }
.po-r3 { height: 23px; display: flex; justify-content: space-between; align-items: center; }
.po-box { width: 103px; height: 17px; border: 1px solid #dcdee0; padding: 3px 0 0 4px; }
.po-r4 { height: 21px; display: flex; align-items: center; }
.po-blue { width: 112px; height: 18px; margin-left: 5px; background: linear-gradient(90deg, #f2f7fb, #dfedf8); border-left: 1px solid #c9ccd0; line-height: 18px; }
.po-after { margin-left: 6px; }
.po-strip { height: 23px; background: #f3f4f5; margin: 0 -3px 0 -10px; padding: 7px 0 0 15px; }
.po-grid2 { display: grid; grid-template-columns: 113px 222px; gap: 10px; }
.po-sh { height: 21px; padding: 5px 0 0 3px; }
.po-box2 { height: 50px; border: 1px solid #e6e8e9; border-top: 0; box-shadow: 0 1px 2px rgba(0,0,0,.08); padding-top: 5px; padding-left: 10px; }
.po-bl1 { height: 22px; }
.po-bl2 { height: 13px; }
.po-right2 { margin-left: -7px; }
.po-rr1, .po-rr2 { height: 21px; display: flex; align-items: center; }
.po-rr1 { padding-right: 33px; }
.po-rr2 { padding-right: 16px; }
.po-push { margin-left: auto; }
.po-bars { display: flex; height: 28px; margin-top: 5px; }
.po-side { width: 30px; display: flex; flex-direction: column; gap: 7px; }
.po-barstack { flex: 1; }
.po-bar1 { height: 14px; background: #e6e7e8; margin-right: 11px; }
.po-bar2 { height: 9px; margin-top: 2px; margin-right: 11px; background: #d6d7d9; padding-left: 5px; color: #8f9498; }
.po-foot { display: flex; height: 20px; align-items: center; margin: 2px 8px 0 140px; border-bottom: 1px solid #e2e3e5; }
.po-f1 { width: 55px; }
.po-f3 { margin-left: auto; }

/* panel two */
.panel-two { margin-top: 4px; width: 381px; height: 230px; flex: none; background: #fff; box-shadow: 0 0 4px rgba(0,0,0,.14); white-space: nowrap; }
.pt-head { height: 18px; background: #eeeff0; display: flex; align-items: center; padding: 0 2px 0 3px; }
.pt-hm { margin-left: 95px; }
.pt-hr { margin-left: auto; }
.pt-body { display: flex; margin-left: 18px; height: 212px; }
.pt-left { width: 158px; background: #fbfbfb; display: flex; flex-direction: column; align-items: center; padding-top: 7px; }
.pt-l2 { margin-top: 15px; text-align: center; line-height: 10px; }
.pt-circle { width: 50px; height: 45px; margin: 8px 0 0 4px; border-radius: 50%; background: #9c6fa5; text-align: center; padding-top: 12px; color: #4a3a50; font-size: 6px; }
.pt-l3 { margin-top: 5px; margin-left: 4px; }
.pt-green1 { width: 112px; height: 20px; margin-top: 19px; margin-left: 4px; background: #dbe6d3; padding: 7px 0 0 6px; }
.pt-green2 { width: 131px; height: 21px; margin-top: 6px; margin-left: 21px; background: #d5e4cc; display: flex; justify-content: space-between; align-items: center; padding: 0 10px; }
.pt-l4 { margin-top: 3px; margin-left: -22px; }
.pt-right { width: 205px; }
.pt-top { display: flex; height: 52px; }
.pt-tab { width: 23px; height: 35px; margin: -12px 0 0 7px; background: #e9eaeb; padding-top: 20px; position: relative; z-index: 1; }
.pt-boxes { margin-left: 4px; width: 142px; }
.pt-box { height: 25px; border: 1px solid #e8e9ea; background: #fff; text-align: center; line-height: 24px; margin-bottom: 1px; }
.box-line { border-bottom: 1px solid #c9cbcd; font-size: 6px; }
.pt-cap { text-align: center; width: 180px; margin-top: 8px; margin-left: 8px; }
.pt-block { width: 180px; height: 81px; margin-top: 5px; background: #e9eaeb; padding-top: 9px; }
.pt-bt { text-align: center; margin-left: 12px; }
.pt-axis { display: flex; align-items: center; padding-left: 12px; margin-top: 2px; }
.pt-axis i { flex: 1; height: 1px; background: #c8cacc; margin: 0 2px; }
.pt-inputs { display: flex; margin-top: 5px; align-items: center; }
.pt-cell { width: 32px; margin-left: 2px; height: 14px; border-right: 1px solid #c9cbcd; border-bottom: 1px solid #c9cbcd; }
.pt-val { width: 41px; height: 21px; background: #eff0f0; text-align: center; line-height: 21px; }
.pt-val2 { width: 76px; height: 21px; margin-left: 14px; background: #f1f1f2; text-align: center; line-height: 21px; }
.pt-final { width: 133px; height: 22px; margin: 7px 0 0 34px; border: 1px solid #eeeff0; text-align: center; line-height: 20px; font-size: 6px; }

/* panel a */
.panel-a { margin: 10px 0 0 -24px; width: 407px; height: 166px; flex: none; background: #f3f4f4; white-space: nowrap; }
.pa-head { height: 23px; display: flex; align-items: center; padding-left: 4px; }
.pa-h1 { width: 56px; }
.pa-main { display: flex; padding-left: 8px; }
.pa-side { width: 41px; margin-top: 2px; height: 127px; flex: none; background: #c9d9b7; }
.pa-side-top { height: 9px; background: #6cab54; }
.pa-side-body { height: 118px; padding: 20px 0 0 0; display: flex; flex-direction: column; gap: 74px; color: #8b966f; text-align: center; }
.pa-content { flex: 1; min-width: 0; }
.pa-sub { height: 21px; padding: 4px 0 0 10px; border-bottom: 1px solid #e4e5e6; }
.pa-white { height: 114px; background: #fff; display: flex; padding-top: 20px; }
.pa-form { width: 190px; }
.pa-fr { display: grid; grid-template-columns: 75px 1fr; gap: 4px; height: 14px; align-items: center; }
.pa-fr-gap { margin-top: 4px; }
.pa-fr span { text-align: right; }
.val { justify-self: start; padding: 2px 3px; }
.vbg { color: #8e9278; }
.pa-info { padding-top: 8px; margin-left: 18px; }
.pa-i2 { margin-top: 9px; }
.pa-i3 { margin-top: 9px; display: flex; gap: 4px; border-left: 1px solid #e2e3e5; padding-left: 5px; background: #f3f4e4; width: 122px; font-size: 6.5px; }
.pa-i3 .t7 { font-size: 6.5px; }
.pa-i4 { margin-top: 8px; border-left: 1px solid #e2e3e5; padding-left: 5px; background: #f3f4e4; width: 85px; font-size: 6.5px; }

/* gray bar */
.graybar { margin: 18px 0 0 -24px; width: 411px; height: 23px; flex: none; background: #c9cacc; display: flex; align-items: center; padding-left: 5px; white-space: nowrap; }
.gb-mini { width: 42px; height: 15px; background: #d5d6d7; border: 1px solid #c2c3c5; }
.gb-box { width: 15px; margin-left: 17px; height: 13px; background: #d8d9da; }
.gb-a { margin-left: 8px; }
.gb-b { margin-left: 27px; }
.gb-c { margin-left: 63px; }
.gb-soft { width: 35px; height: 16px; margin-left: 8px; background: #d2d3d5; }
.gb-d { margin-left: 13px; }

/* panel b */
.panel-b { margin: 1px 0 0 -24px; width: 407px; height: 163px; flex: none; background: #fff; box-shadow: 0 1px 3px rgba(0,0,0,.16); white-space: nowrap; }
.pb-head { height: 25px; background: #e3e4e5; display: flex; justify-content: space-between; align-items: center; padding: 0 18px 0 7px; }
.pb-body { display: flex; justify-content: space-between; padding-right: 20px; }
.pb-left { padding: 20px 0 0 22px; }
.pb-card { width: 115px; height: 67px; box-shadow: 0 0 1px rgba(0,0,0,.25); }
.pb-ctop { height: 22px; display: flex; align-items: center; background: #efefef; padding-left: 20px; justify-content: space-between; }
.pb-cside { width: 38px; height: 22px; background: #e4e4e8; padding: 2px 4px; }
.pb-glow { height: 45px; background: radial-gradient(ellipse 40px 36px at 50% 40%, #f6f6d8, #ffffff); display: flex; align-items: center; }
.pb-lab { width: 46px; height: 15px; background: #e9e9e9; margin-left: -1px; margin-top: -4px; padding: 3px 0 0 4px; }
.pb-yel { margin: 14px 0 0 5px; background: #f1efc8; }
.pb-ora { width: 5px; height: 5px; background: #e3c9a0; margin: 6px 0 0 24px; }
.pb-tile { width: 86px; height: 29px; margin: 5px 0 0 7px; background: #dcdcdd; display: flex; flex-direction: column; align-items: center; padding-top: 4px; gap: 5px; font-size: 6px; }
.pb-tile .t6 { font-size: 5.6px; }
.pb-list { width: 145px; padding-top: 19px; }
.pb-cap { text-align: right; height: 13px; }
.pb-li { height: 21px; display: flex; justify-content: flex-end; align-items: center; gap: 5px; border-top: 1px solid #f3f4f4; }
.pb-tag { margin-right: auto; width: 40px; height: 19px; background: #e2e3e1; padding-top: 2px; text-align: center; }
.pb-tag i { display: block; }
```
